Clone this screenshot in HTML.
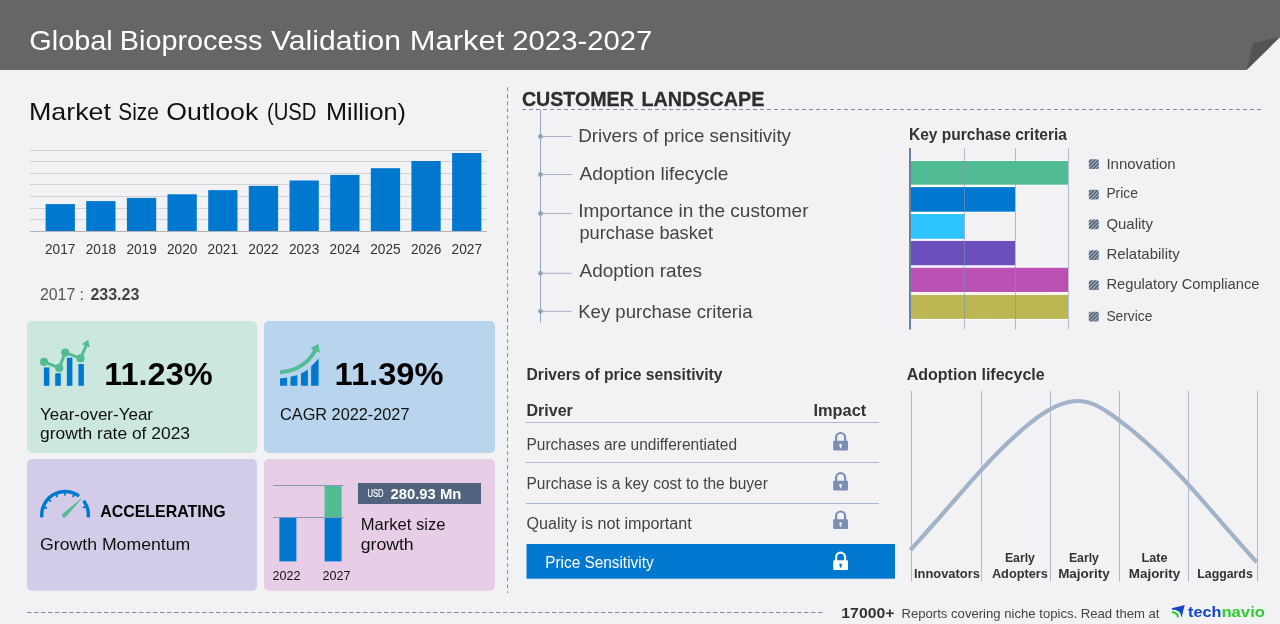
<!DOCTYPE html>
<html lang="en">
<head>
<meta charset="utf-8">
<title>Global Bioprocess Validation Market 2023-2027</title>
<style>
  html, body { margin: 0; padding: 0; background: #f2f2f5; }
  body { width: 1280px; height: 624px; overflow: hidden; position: relative; }
  svg { position: absolute; left: 0; top: 0; display: block; will-change: transform; }
  text { font-family: "Liberation Sans", sans-serif; }
  .b { font-weight: bold; }
</style>
</head>
<body>
<svg width="1280" height="624" viewBox="0 0 1280 624">
  <defs>
    <pattern id="hatch" width="2.6" height="2.6" patternUnits="userSpaceOnUse" patternTransform="rotate(-45)">
      <rect width="2.6" height="2.6" fill="#a8bbd6"/>
      <rect width="2.6" height="1.35" fill="#474f5b"/>
    </pattern>
  </defs>

  <!-- page background -->
  <rect x="0" y="0" width="1280" height="624" fill="#f2f2f5"/>

  <!-- ===== HEADER ===== -->
  <g id="header">
    <path d="M0 0 H1280 V37 L1246.5 70 H0 Z" fill="#666666"/>
    <path d="M1246.5 70 L1253 43 L1280 37 Z" fill="#545454"/>
    <g font-size="28.5" fill="#ffffff">
      <text x="29.3" y="49.5" textLength="83.5" lengthAdjust="spacingAndGlyphs">Global</text>
      <text x="119.8" y="49.5" textLength="142.5" lengthAdjust="spacingAndGlyphs">Bioprocess</text>
      <text x="271" y="49.5" textLength="130" lengthAdjust="spacingAndGlyphs">Validation</text>
      <text x="409.8" y="49.5" textLength="94.5" lengthAdjust="spacingAndGlyphs">Market</text>
      <text x="512.3" y="49.5" textLength="140" lengthAdjust="spacingAndGlyphs">2023-2027</text>
    </g>
  </g>

  <!-- ===== SEPARATORS ===== -->
  <g id="separators" fill="none" stroke="#7a8eae" stroke-width="1">
    <line x1="507.5" y1="87.2" x2="507.5" y2="593" stroke-dasharray="4 3"/>
    <line x1="522" y1="109.5" x2="1262" y2="109.5" stroke-dasharray="4 3"/>
    <line x1="27" y1="612.5" x2="823" y2="612.5" stroke-dasharray="4.5 2.5"/>
  </g>

  <!-- ===== LEFT: MARKET SIZE OUTLOOK ===== -->
  <g id="market-size">
    <g font-size="24" fill="#111111">
      <text x="29" y="120.3" textLength="82" lengthAdjust="spacingAndGlyphs">Market</text>
      <text x="118.3" y="120.3" textLength="40.5" lengthAdjust="spacingAndGlyphs">Size</text>
      <text x="166.3" y="120.3" textLength="92" lengthAdjust="spacingAndGlyphs">Outlook</text>
      <text x="267" y="120.3" textLength="49.5" lengthAdjust="spacingAndGlyphs">(USD</text>
      <text x="326" y="120.3" textLength="80" lengthAdjust="spacingAndGlyphs">Million)</text>
    </g>
    <g stroke="#d2d2d6" stroke-width="1">
      <line x1="30" y1="150.5" x2="487" y2="150.5"/>
      <line x1="30" y1="161.5" x2="487" y2="161.5"/>
      <line x1="30" y1="173.5" x2="487" y2="173.5"/>
      <line x1="30" y1="184.5" x2="487" y2="184.5"/>
      <line x1="30" y1="196.5" x2="487" y2="196.5"/>
      <line x1="30" y1="208.5" x2="487" y2="208.5"/>
      <line x1="30" y1="219.5" x2="487" y2="219.5"/>
    </g>
    <g fill="#0078d0">
      <rect x="45.6" y="204.1" width="29.3" height="27.4"/>
      <rect x="86.2" y="201.1" width="29.3" height="30.4"/>
      <rect x="126.9" y="197.9" width="29.3" height="33.6"/>
      <rect x="167.5" y="194.3" width="29.3" height="37.2"/>
      <rect x="208.2" y="190.1" width="29.3" height="41.4"/>
      <rect x="248.8" y="185.9" width="29.3" height="45.6"/>
      <rect x="289.5" y="180.5" width="29.3" height="51.0"/>
      <rect x="330.2" y="174.9" width="29.3" height="56.6"/>
      <rect x="370.8" y="168.2" width="29.3" height="63.3"/>
      <rect x="411.4" y="161.0" width="29.3" height="70.5"/>
      <rect x="452.1" y="153.0" width="29.3" height="78.5"/>
    </g>
    <line x1="30" y1="231.5" x2="487" y2="231.5" stroke="#b4b4b8" stroke-width="1"/>
    <g font-size="14.4" fill="#333333" text-anchor="middle">
      <text x="60.2" y="254" textLength="30.4" lengthAdjust="spacingAndGlyphs">2017</text>
      <text x="100.9" y="254" textLength="30.4" lengthAdjust="spacingAndGlyphs">2018</text>
      <text x="141.6" y="254" textLength="30.4" lengthAdjust="spacingAndGlyphs">2019</text>
      <text x="182.2" y="254" textLength="30.4" lengthAdjust="spacingAndGlyphs">2020</text>
      <text x="222.8" y="254" textLength="30.4" lengthAdjust="spacingAndGlyphs">2021</text>
      <text x="263.5" y="254" textLength="30.4" lengthAdjust="spacingAndGlyphs">2022</text>
      <text x="304.1" y="254" textLength="30.4" lengthAdjust="spacingAndGlyphs">2023</text>
      <text x="344.8" y="254" textLength="30.4" lengthAdjust="spacingAndGlyphs">2024</text>
      <text x="385.4" y="254" textLength="30.4" lengthAdjust="spacingAndGlyphs">2025</text>
      <text x="426.1" y="254" textLength="30.4" lengthAdjust="spacingAndGlyphs">2026</text>
      <text x="466.8" y="254" textLength="30.4" lengthAdjust="spacingAndGlyphs">2027</text>
    </g>
    <text x="40" y="299.5" font-size="16" fill="#555555" textLength="44" lengthAdjust="spacingAndGlyphs">2017 :</text>
    <text x="90.4" y="299.5" font-size="16" fill="#444444" class="b" textLength="49" lengthAdjust="spacingAndGlyphs">233.23</text>
  </g>

  <!-- ===== CARDS ===== -->
  <g id="cards">
    <rect x="27" y="321" width="230" height="132" rx="5" fill="#cce7dd"/>
    <rect x="264" y="321" width="231" height="132" rx="5" fill="#b9d5ed"/>
    <rect x="27" y="459.1" width="230" height="131.7" rx="5" fill="#d3cce8"/>
    <rect x="264" y="459.1" width="231" height="131.7" rx="5" fill="#e7cde5"/>

    <!-- card 1: YoY growth -->
    <g id="icon-yoy">
      <g fill="#0078d0">
        <rect x="43.9" y="367.4" width="5.5" height="18.4"/>
        <rect x="55.2" y="373.2" width="5.6" height="12.6"/>
        <rect x="66.9" y="357.7" width="5.5" height="28.1"/>
        <rect x="78.4" y="364" width="5.5" height="21.8"/>
      </g>
      <polyline points="44.1,361.9 59.2,367.9 65.2,352.6 80.5,358.4 86.5,345" fill="none" stroke="#52bd94" stroke-width="3" stroke-linejoin="round"/>
      <g fill="#52bd94">
        <circle cx="44.1" cy="361.9" r="4.1"/>
        <circle cx="59.2" cy="367.9" r="4.1"/>
        <circle cx="65.2" cy="352.6" r="4.1"/>
        <circle cx="80.5" cy="358.4" r="4.1"/>
        <path d="M88.1 339.8 L89.8 347.5 L81.9 344.2 Z"/>
      </g>
    </g>
    <text x="104.2" y="384.7" font-size="32" class="b" fill="#000000" textLength="108.5" lengthAdjust="spacingAndGlyphs">11.23%</text>
    <text x="40" y="419.9" font-size="16" fill="#111111" textLength="113" lengthAdjust="spacingAndGlyphs">Year-over-Year</text>
    <text x="40" y="439.4" font-size="16" fill="#111111" textLength="150" lengthAdjust="spacingAndGlyphs">growth rate of 2023</text>

    <!-- card 2: CAGR -->
    <g id="icon-cagr">
      <g fill="#0078d0">
        <path d="M280 378.4 L287.1 377.6 V385.7 H280 Z"/>
        <path d="M290.5 376.8 L297.3 374.9 V385.7 H290.5 Z"/>
        <path d="M301 373.4 L307.9 369.7 V385.7 H301 Z"/>
        <path d="M311.1 366.5 L318.6 358.6 V385.7 H311.1 Z"/>
      </g>
      <path d="M280 372.3 C292 371.5 307 366 315.5 350" fill="none" stroke="#52bd94" stroke-width="4"/>
      <path d="M318.2 343.8 L320.1 352.8 L310.2 348.6 Z" fill="#52bd94"/>
    </g>
    <text x="334.6" y="384.7" font-size="32" class="b" fill="#000000" textLength="108.8" lengthAdjust="spacingAndGlyphs">11.39%</text>
    <text x="280" y="419.5" font-size="16.5" fill="#111111" textLength="129.5" lengthAdjust="spacingAndGlyphs">CAGR 2022-2027</text>

    <!-- card 3: growth momentum -->
    <g id="icon-gauge">
      <path d="M41.89 517.32 A23.3 23.3 0 0 1 79.07 496.19 M83.66 500.78 A23.3 23.3 0 0 1 88.21 517.32" fill="none" stroke="#0078d0" stroke-width="3.4"/>
      <g stroke="#0078d0" stroke-width="2">
        <line x1="44.38" y1="507.28" x2="46.91" y2="508.20"/>
        <line x1="48.96" y1="499.80" x2="50.93" y2="501.64"/>
        <line x1="56.10" y1="494.70" x2="57.20" y2="497.17"/>
        <line x1="65.05" y1="492.80" x2="65.05" y2="495.50"/>
        <line x1="74.00" y1="494.70" x2="72.90" y2="497.17"/>
        <line x1="85.45" y1="506.56" x2="82.94" y2="507.57"/>
      </g>
      <path d="M83 497.1 L66.2 516.6 Q63.8 518.4 62.5 516.9 Q61.4 515.4 63.3 513.2 Z" fill="#52bd94"/>
    </g>
    <text x="100.2" y="517" font-size="17" class="b" fill="#000000" textLength="125.5" lengthAdjust="spacingAndGlyphs">ACCELERATING</text>
    <text x="40" y="549.8" font-size="16.5" fill="#111111" textLength="150.3" lengthAdjust="spacingAndGlyphs">Growth Momentum</text>

    <!-- card 4: market size growth -->
    <g id="icon-msg">
      <rect x="279.4" y="517.3" width="17" height="44.1" fill="#0078d0"/>
      <rect x="324.6" y="517.3" width="17" height="44.1" fill="#0078d0"/>
      <rect x="324.6" y="485.2" width="17" height="32.1" fill="#52bd94"/>
      <line x1="273" y1="485.5" x2="343.5" y2="485.5" stroke="#8497b3" stroke-width="1"/>
      <line x1="273" y1="517.5" x2="343.5" y2="517.5" stroke="#8497b3" stroke-width="1"/>
    </g>
    <text x="272.4" y="580" font-size="13.5" fill="#111111" textLength="28" lengthAdjust="spacingAndGlyphs">2022</text>
    <text x="322.4" y="580" font-size="13.5" fill="#111111" textLength="28" lengthAdjust="spacingAndGlyphs">2027</text>
    <rect x="358" y="483" width="123" height="21" fill="#50627d"/>
    <text x="367.6" y="497.2" font-size="10" fill="#ffffff" stroke="#ffffff" stroke-width="0.2" textLength="16" lengthAdjust="spacingAndGlyphs">USD</text>
    <text x="390.5" y="498.7" font-size="15" class="b" fill="#ffffff" textLength="70.8" lengthAdjust="spacingAndGlyphs">280.93 Mn</text>
    <text x="360.7" y="529.8" font-size="16.5" fill="#111111" textLength="84.8" lengthAdjust="spacingAndGlyphs">Market size</text>
    <text x="360.7" y="549.8" font-size="16.5" fill="#111111" textLength="53" lengthAdjust="spacingAndGlyphs">growth</text>
  </g>

  <!-- ===== CUSTOMER LANDSCAPE ===== -->
  <g id="customer-landscape">
    <g font-size="20.8" class="b" fill="#2e2e2e" stroke="#2e2e2e" stroke-width="0.3">
      <text x="521.9" y="105.7" textLength="112" lengthAdjust="spacingAndGlyphs">CUSTOMER</text>
      <text x="641.5" y="105.7" textLength="123" lengthAdjust="spacingAndGlyphs">LANDSCAPE</text>
    </g>
    <line x1="540.5" y1="110" x2="540.5" y2="322.5" stroke="#95a4be" stroke-width="1"/>
    <g stroke="#a3b0c6" stroke-width="1">
      <line x1="540.5" y1="136.5" x2="571.5" y2="136.5"/>
      <line x1="540.5" y1="174.5" x2="571.5" y2="174.5"/>
      <line x1="540.5" y1="213.5" x2="571.5" y2="213.5"/>
      <line x1="540.5" y1="273.3" x2="571.5" y2="273.3"/>
      <line x1="540.5" y1="311.3" x2="571.5" y2="311.3"/>
    </g>
    <g fill="#8fa1bd">
      <circle cx="540.5" cy="136.5" r="2.4"/>
      <circle cx="540.5" cy="174.5" r="2.4"/>
      <circle cx="540.5" cy="213.5" r="2.4"/>
      <circle cx="540.5" cy="273.3" r="2.4"/>
      <circle cx="540.5" cy="311.3" r="2.4"/>
    </g>
    <g font-size="18.5" fill="#444444">
      <text x="578.2" y="142.2" textLength="212.8" lengthAdjust="spacingAndGlyphs">Drivers of price sensitivity</text>
      <text x="579.5" y="180.1" textLength="149" lengthAdjust="spacingAndGlyphs">Adoption lifecycle</text>
      <text x="578.2" y="217" textLength="230.3" lengthAdjust="spacingAndGlyphs">Importance in the customer</text>
      <text x="579.5" y="239.2" textLength="133.5" lengthAdjust="spacingAndGlyphs">purchase basket</text>
      <text x="579.5" y="277.2" textLength="122.5" lengthAdjust="spacingAndGlyphs">Adoption rates</text>
      <text x="578.2" y="318.2" textLength="174.3" lengthAdjust="spacingAndGlyphs">Key purchase criteria</text>
    </g>
  </g>

  <!-- ===== KEY PURCHASE CRITERIA ===== -->
  <g id="kpc">
    <text x="909" y="140.4" font-size="16" class="b" fill="#333333" textLength="158" lengthAdjust="spacingAndGlyphs">Key purchase criteria</text>
    <g id="kpc-bars">
      <rect x="911" y="160.0" width="158" height="25.7" fill="#ffffff"/>
      <rect x="911" y="161" width="157" height="23.7" fill="#52bd94"/>
      <rect x="911" y="186.1" width="105" height="26.6" fill="#ffffff"/>
      <rect x="911" y="187.1" width="104" height="24.6" fill="#0078d0"/>
      <rect x="911" y="213.0" width="54.5" height="26.8" fill="#ffffff"/>
      <rect x="911" y="214" width="53.5" height="24.8" fill="#2ec4ff"/>
      <rect x="911" y="239.9" width="105" height="26.4" fill="#ffffff"/>
      <rect x="911" y="240.9" width="104" height="24.4" fill="#6b50bd"/>
      <rect x="911" y="266.7" width="158" height="26.3" fill="#ffffff"/>
      <rect x="911" y="267.7" width="157" height="24.3" fill="#bb50b5"/>
      <rect x="911" y="293.9" width="158" height="26.0" fill="#ffffff"/>
      <rect x="911" y="294.9" width="157" height="24.0" fill="#bdb753"/>
    </g>
    <g stroke="#8093b0" stroke-opacity="0.6" stroke-width="1">
      <line x1="964.5" y1="148" x2="964.5" y2="329.5"/>
      <line x1="1015.5" y1="148" x2="1015.5" y2="329.5"/>
      <line x1="1068.5" y1="148" x2="1068.5" y2="329.5"/>
    </g>
    <line x1="910" y1="148" x2="910" y2="329.5" stroke="#6a7fa5" stroke-width="2"/>
    <g fill="url(#hatch)">
      <rect x="1088.8" y="159.2" width="10" height="9.8" rx="1.5"/>
      <rect x="1088.8" y="189.7" width="10" height="9.8" rx="1.5"/>
      <rect x="1088.8" y="219.5" width="10" height="9.8" rx="1.5"/>
      <rect x="1088.8" y="250.2" width="10" height="9.8" rx="1.5"/>
      <rect x="1088.8" y="280.2" width="10" height="9.8" rx="1.5"/>
      <rect x="1088.8" y="311.7" width="10" height="9.8" rx="1.5"/>
    </g>
    <g font-size="14.6" fill="#444444">
      <text x="1106.4" y="168.6" textLength="69.3" lengthAdjust="spacingAndGlyphs">Innovation</text>
      <text x="1106.4" y="198.4" textLength="31.5" lengthAdjust="spacingAndGlyphs">Price</text>
      <text x="1106.4" y="229.1" textLength="46.5" lengthAdjust="spacingAndGlyphs">Quality</text>
      <text x="1106.4" y="259.4" textLength="73.3" lengthAdjust="spacingAndGlyphs">Relatability</text>
      <text x="1106.4" y="289.4" textLength="153.1" lengthAdjust="spacingAndGlyphs">Regulatory Compliance</text>
      <text x="1106.4" y="321.1" textLength="46" lengthAdjust="spacingAndGlyphs">Service</text>
    </g>
  </g>

  <!-- ===== DRIVERS OF PRICE SENSITIVITY ===== -->
  <g id="drivers">
    <text x="526.5" y="379.8" font-size="16" class="b" fill="#333333" textLength="196" lengthAdjust="spacingAndGlyphs">Drivers of price sensitivity</text>
    <text x="526.5" y="415.8" font-size="16" class="b" fill="#333333" textLength="46.3" lengthAdjust="spacingAndGlyphs">Driver</text>
    <text x="813.5" y="415.8" font-size="16" class="b" fill="#333333" textLength="52.8" lengthAdjust="spacingAndGlyphs">Impact</text>
    <g stroke="#a9b8cf" stroke-width="1">
      <line x1="526" y1="422.5" x2="879" y2="422.5"/>
      <line x1="526" y1="462.5" x2="879" y2="462.5"/>
      <line x1="526" y1="503.5" x2="879" y2="503.5"/>
    </g>
    <g font-size="16" fill="#444444">
      <text x="526.5" y="450.2" textLength="210.5" lengthAdjust="spacingAndGlyphs">Purchases are undifferentiated</text>
      <text x="526.5" y="488.7" textLength="241.3" lengthAdjust="spacingAndGlyphs">Purchase is a key cost to the buyer</text>
      <text x="526.5" y="528.7" textLength="165.3" lengthAdjust="spacingAndGlyphs">Quality is not important</text>
    </g>
    <rect x="526.5" y="544" width="368.5" height="34.7" fill="#0078d0"/>
    <text x="545.2" y="568.2" font-size="16" fill="#ffffff" textLength="108.4" lengthAdjust="spacingAndGlyphs">Price Sensitivity</text>
    <g transform="translate(833.2 431.9)"><path d="M2.9 9.5 V5.6 A4.5 4.5 0 0 1 11.9 5.6 V9.5" fill="none" stroke="#7b8fb0" stroke-width="2.2"/><rect x="0" y="8.8" width="14.8" height="9.8" rx="1" fill="#7b8fb0"/><circle cx="7.4" cy="13.3" r="1.35" fill="#f2f2f5"/><path d="M6.8 13.8 H8 L8.1 16.3 H6.7 Z" fill="#f2f2f5"/></g>
    <g transform="translate(833.2 472)"><path d="M2.9 9.5 V5.6 A4.5 4.5 0 0 1 11.9 5.6 V9.5" fill="none" stroke="#7b8fb0" stroke-width="2.2"/><rect x="0" y="8.8" width="14.8" height="9.8" rx="1" fill="#7b8fb0"/><circle cx="7.4" cy="13.3" r="1.35" fill="#f2f2f5"/><path d="M6.8 13.8 H8 L8.1 16.3 H6.7 Z" fill="#f2f2f5"/></g>
    <g transform="translate(833.2 510.4)"><path d="M2.9 9.5 V5.6 A4.5 4.5 0 0 1 11.9 5.6 V9.5" fill="none" stroke="#7b8fb0" stroke-width="2.2"/><rect x="0" y="8.8" width="14.8" height="9.8" rx="1" fill="#7b8fb0"/><circle cx="7.4" cy="13.3" r="1.35" fill="#f2f2f5"/><path d="M6.8 13.8 H8 L8.1 16.3 H6.7 Z" fill="#f2f2f5"/></g>
    <g transform="translate(833.2 551.5)"><path d="M2.9 9.5 V5.6 A4.5 4.5 0 0 1 11.9 5.6 V9.5" fill="none" stroke="#ffffff" stroke-width="2.2"/><rect x="0" y="8.8" width="14.8" height="9.8" rx="1" fill="#ffffff"/><circle cx="7.4" cy="13.3" r="1.35" fill="#0078d0"/><path d="M6.8 13.8 H8 L8.1 16.3 H6.7 Z" fill="#0078d0"/></g>
  </g>

  <!-- ===== ADOPTION LIFECYCLE ===== -->
  <g id="adoption">
    <text x="906.7" y="379.7" font-size="16" class="b" fill="#333333" textLength="138" lengthAdjust="spacingAndGlyphs">Adoption lifecycle</text>
    <g stroke="#b0bbcd" stroke-width="1">
      <line x1="911.5" y1="391" x2="911.5" y2="581.5"/>
      <line x1="981.5" y1="391" x2="981.5" y2="581.5"/>
      <line x1="1050.5" y1="391" x2="1050.5" y2="581.5"/>
      <line x1="1119.5" y1="391" x2="1119.5" y2="581.5"/>
      <line x1="1188.5" y1="391" x2="1188.5" y2="581.5"/>
      <line x1="1257.5" y1="391" x2="1257.5" y2="581.5"/>
    </g>
    <path d="M910.4 550.0 C913.7 546.4 917.0 542.8 920.3 539.1 C923.6 535.5 926.9 531.8 930.2 528.0 C933.5 524.3 936.8 520.5 940.1 516.8 C943.4 513.0 946.7 509.2 950.0 505.4 C953.3 501.6 956.6 497.9 959.9 494.1 C963.2 490.3 966.5 486.6 969.7 482.9 C973.0 479.2 976.3 475.5 979.6 471.9 C982.9 468.3 986.2 464.8 989.5 461.3 C992.8 457.8 996.1 454.4 999.4 451.1 C1002.7 447.7 1006.0 444.5 1009.3 441.4 C1012.6 438.2 1015.9 435.2 1019.2 432.3 C1022.5 429.3 1025.8 426.5 1029.1 423.9 C1032.4 421.2 1035.7 418.7 1039.0 416.3 C1042.3 414.0 1045.6 411.9 1048.9 410.0 C1052.2 408.1 1055.5 406.4 1058.8 405.1 C1062.1 403.7 1065.4 402.7 1068.7 402.0 C1072.0 401.3 1075.3 400.9 1078.6 401.0 C1081.9 401.1 1085.1 401.5 1088.4 402.5 C1091.7 403.4 1095.0 404.8 1098.3 406.5 C1101.6 408.2 1104.9 410.2 1108.2 412.5 C1111.5 414.7 1114.8 417.1 1118.1 419.5 C1121.4 422.0 1124.7 424.6 1128.0 427.2 C1131.3 429.8 1134.6 432.5 1137.9 435.3 C1141.2 438.1 1144.5 441.0 1147.8 444.0 C1151.1 446.9 1154.4 450.0 1157.7 453.1 C1161.0 456.2 1164.3 459.4 1167.6 462.8 C1170.9 466.1 1174.2 469.5 1177.5 473.0 C1180.8 476.4 1184.1 480.0 1187.4 483.6 C1190.7 487.2 1194.0 490.9 1197.3 494.6 C1200.5 498.3 1203.8 502.0 1207.1 505.8 C1210.4 509.6 1213.7 513.3 1217.0 517.1 C1220.3 520.9 1223.6 524.8 1226.9 528.6 C1230.2 532.3 1233.5 536.1 1236.8 539.9 C1240.1 543.7 1243.4 547.4 1246.7 551.1 C1250.0 554.8 1253.3 558.4 1256.6 562.0" fill="none" stroke="#a2b2c9" stroke-width="4.2" stroke-linecap="butt"/>
    <g font-size="13.7" class="b" fill="#333333" text-anchor="middle">
      <text x="946.9" y="578" textLength="65.8" lengthAdjust="spacingAndGlyphs">Innovators</text>
      <text x="1019.9" y="561.7" textLength="30" lengthAdjust="spacingAndGlyphs">Early</text>
      <text x="1019.9" y="578" textLength="56" lengthAdjust="spacingAndGlyphs">Adopters</text>
      <text x="1083.9" y="561.7" textLength="30" lengthAdjust="spacingAndGlyphs">Early</text>
      <text x="1083.9" y="578" textLength="51.5" lengthAdjust="spacingAndGlyphs">Majority</text>
      <text x="1154.5" y="561.7" textLength="26" lengthAdjust="spacingAndGlyphs">Late</text>
      <text x="1154.5" y="578" textLength="51.5" lengthAdjust="spacingAndGlyphs">Majority</text>
      <text x="1225" y="578" textLength="55.5" lengthAdjust="spacingAndGlyphs">Laggards</text>
    </g>
  </g>


  <!-- ===== FOOTER ===== -->
  <g id="footer">
    <text x="841.3" y="617.6" font-size="14.8" class="b" fill="#333333" textLength="53.2" lengthAdjust="spacingAndGlyphs">17000+</text>
    <text x="901.5" y="617.6" font-size="13.4" fill="#444444" textLength="258" lengthAdjust="spacingAndGlyphs">Reports covering niche topics. Read them at</text>
    <g id="logo">
      <path d="M1171.8 608.3 L1184.7 605 L1181.5 617.8 Q1180.6 612.6 1178.6 611.3 Q1176 609.8 1171.8 609.6 Z" fill="#1446c8"/>
      <path d="M1172 611.1 Q1178.6 611.6 1179 617.1 L1177 617.6 Q1176.6 613.3 1172 613.2 Z" fill="#33cc33"/>
      <text x="1188" y="616.7" font-size="14.4" class="b" fill="#1446c8" textLength="33.4" lengthAdjust="spacingAndGlyphs">tech</text>
      <text x="1221.4" y="616.7" font-size="14.4" class="b" fill="#33cc33" textLength="43.6" lengthAdjust="spacingAndGlyphs">navio</text>
    </g>
  </g>

</svg>
</body>
</html>
